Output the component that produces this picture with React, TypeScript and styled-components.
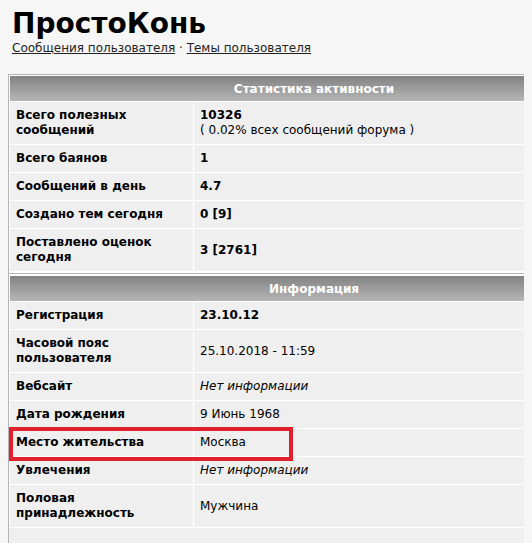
import React from "react";
import styled, { createGlobalStyle } from "styled-components";

const Global = createGlobalStyle`
  html, body { overflow: hidden; }
  body {
    margin: 8px;
    background: #f6f6f6;
    font-family: "DejaVu Sans", Verdana, sans-serif;
    color: #000;
  }
`;

const Page = styled.div`
  display: flex;
  flex-direction: column;
`;

const Title = styled.h1`
  margin: 0;
  padding-left: 4px;
  font-size: 28px;
  line-height: 32px;
  font-weight: bold;
  color: #000;
`;

const Links = styled.div`
  padding-left: 4px;
  font-size: 12px;
  line-height: 16px;
  color: #222;
  margin-bottom: 18px;
`;

const Link = styled.a`
  color: #222;
  text-decoration: underline;
  cursor: pointer;
`;

const Board = styled.div`
  width: 609px;
  border-left: 1px solid #b4b4b4;
  background: #efefef;
  padding-bottom: 40px;
`;

const Section = styled.div<{ $pt: number; $pb: number }>`
  display: grid;
  grid-template-columns: 183px 1fr;
  gap: 1px;
  border-top: 1px solid #b4b4b4;
  background: #fff;
  padding: ${(p) => p.$pt}px 0 ${(p) => p.$pb}px 1px;
`;

const Header = styled.div`
  grid-column: 1 / -1;
  height: 25px;
  display: flex;
  align-items: center;
  justify-content: center;
  background: linear-gradient(#828282, #b6b6b6);
  color: #fff;
  font-weight: bold;
  font-size: 12px;
`;

const Cell = styled.div<{ $bold?: boolean; $italic?: boolean }>`
  position: relative;
  background: #efefef;
  padding: 6px;
  min-height: 15px;
  font-size: 12px;
  line-height: 15px;
  display: flex;
  flex-direction: column;
  justify-content: center;
  font-weight: ${(p) => (p.$bold ? "bold" : "normal")};
  font-style: ${(p) => (p.$italic ? "italic" : "normal")};
`;

const Highlight = styled.div`
  position: absolute;
  z-index: 5;
  left: -1px;
  top: -2px;
  width: 284px;
  height: 34px;
  box-sizing: border-box;
  border: 4px solid #e0202c;
  pointer-events: none;
`;

type Row = {
  label: string;
  value: React.ReactNode;
  bold?: boolean;
  italic?: boolean;
  mark?: boolean;
};

const stats: Row[] = [
  {
    label: "Всего полезных сообщений",
    value: (
      <>
        <b>10326</b>
        <span>( 0.02% всех сообщений форума )</span>
      </>
    ),
  },
  { label: "Всего баянов", value: "1", bold: true },
  { label: "Сообщений в день", value: "4.7", bold: true },
  { label: "Создано тем сегодня", value: "0 [9]", bold: true },
  { label: "Поставлено оценок сегодня", value: "3 [2761]", bold: true },
];

const info: Row[] = [
  { label: "Регистрация", value: "23.10.12", bold: true },
  { label: "Часовой пояс пользователя", value: "25.10.2018 - 11:59" },
  { label: "Вебсайт", value: "Нет информации", italic: true },
  { label: "Дата рождения", value: "9 Июнь 1968" },
  { label: "Место жительства", value: "Москва", mark: true },
  { label: "Увлечения", value: "Нет информации", italic: true },
  { label: "Половая принадлежность", value: "Мужчина" },
];

const renderRows = (rows: Row[]) =>
  rows.map((r) => (
    <React.Fragment key={r.label}>
      <Cell $bold>
        {r.label}
        {r.mark && <Highlight />}
      </Cell>
      <Cell $bold={r.bold} $italic={r.italic}>
        {r.value}
      </Cell>
    </React.Fragment>
  ));

export default function App() {
  return (
    <Page>
      <Global />
      <Title>ПростоКонь</Title>
      <Links>
        <Link>Сообщения пользователя</Link> · <Link>Темы пользователя</Link>
      </Links>
      <Board>
        <Section $pt={1} $pb={2}>
          <Header>Статистика активности</Header>
          {renderRows(stats)}
        </Section>
        <Section $pt={2} $pb={1}>
          <Header>Информация</Header>
          {renderRows(info)}
        </Section>
      </Board>
    </Page>
  );
}
